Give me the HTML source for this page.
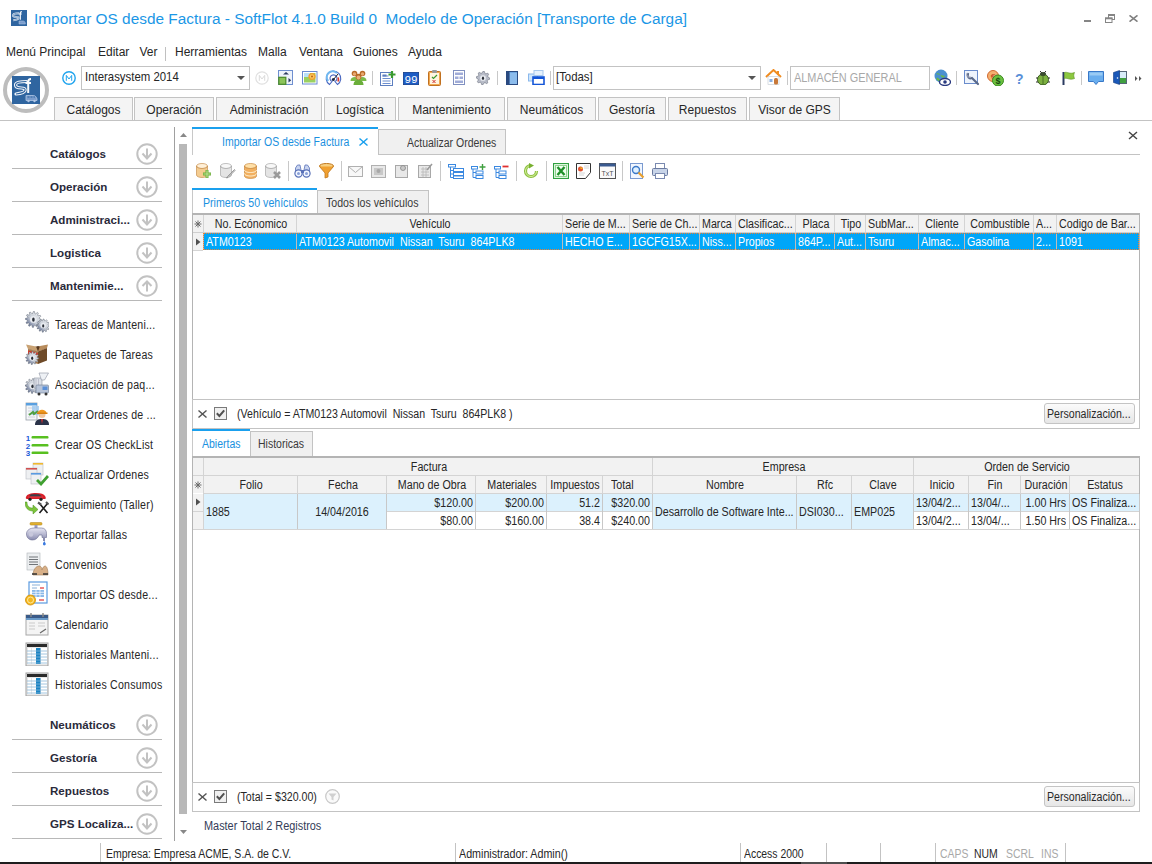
<!DOCTYPE html><html><head><meta charset="utf-8"><style>
html,body{margin:0;padding:0;width:1152px;height:864px;overflow:hidden;background:#fff;}
body{position:relative;font-family:"Liberation Sans",sans-serif;}
.t{position:absolute;white-space:pre;}
.r{position:absolute;}
</style></head><body>
<svg class="r" style="left:11px;top:10px" width="16" height="16" viewBox="0 0 16 16"><rect width="16" height="16" fill="#2f65a0"/><path d="M8.3 3.2C5 3.2 2 3.7 2 5.2s1.7 1.7 3.4 1.7 2.3.6 2 1.4C7.1 9.4 4.6 10 2.3 10.3" stroke="#eef2f8" stroke-width="1.9" fill="none"/><path d="M8.3 3.2C5 3.2 2 3.7 2 5.2s1.7 1.7 3.4 1.7 2.3.6 2 1.4C7.1 9.4 4.6 10 2.3 10.3" stroke="#2f65a0" stroke-width=".6" fill="none"/><path d="M10.9 1.7c-1.1 0-1.6.6-1.6 1.7v6.3M7.7 4h3.1" stroke="#f6f8fb" stroke-width="1.2" fill="none"/><path d="M8 11h4.3c.9 0 1.7.9 2 2v1H8z" fill="#7a9ccc" stroke="#b0c6e4" stroke-width=".5"/></svg>
<div class="t" style="left:34px;transform-origin:0 0;top:10.91px;font-size:15.40px;line-height:15.40px;color:#1b97e6;">Importar OS desde Factura - SoftFlot 4.1.0 Build 0&nbsp; Modelo de Operación [Transporte de Carga]</div>
<div class="r" style="left:1084px;top:20px;width:7px;height:2px;background:#858585;"></div>
<svg class="r" style="left:1105px;top:14px" width="10" height="9"><rect x="3.5" y=".5" width="6" height="5" fill="none" stroke="#858585" stroke-width="1"/><rect x="3" y="0" width="7" height="2" fill="#858585"/><rect x=".5" y="4" width="6.5" height="4.5" fill="#fff" stroke="#858585" stroke-width="1"/><rect x="0" y="3.5" width="7.5" height="1.8" fill="#858585"/></svg>
<svg class="r" style="left:1129px;top:15px" width="9" height="7"><path d="M.5 .3L8.5 6.7M8.5 .3L.5 6.7" stroke="#808080" stroke-width="1.5"/></svg>
<div class="t" style="left:6px;transform-origin:0 0;top:45.80px;font-size:12.00px;line-height:12.00px;color:#262626;">Menú Principal</div>
<div class="t" style="left:98px;transform-origin:0 0;top:45.80px;font-size:12.00px;line-height:12.00px;color:#262626;">Editar</div>
<div class="t" style="left:139.5px;transform-origin:0 0;top:45.80px;font-size:12.00px;line-height:12.00px;color:#262626;">Ver</div>
<div class="t" style="left:175px;transform-origin:0 0;top:45.80px;font-size:12.00px;line-height:12.00px;color:#262626;">Herramientas</div>
<div class="t" style="left:258px;transform-origin:0 0;top:45.80px;font-size:12.00px;line-height:12.00px;color:#262626;">Malla</div>
<div class="t" style="left:299px;transform-origin:0 0;top:45.80px;font-size:12.00px;line-height:12.00px;color:#262626;">Ventana</div>
<div class="t" style="left:353px;transform-origin:0 0;top:45.80px;font-size:12.00px;line-height:12.00px;color:#262626;">Guiones</div>
<div class="t" style="left:408px;transform-origin:0 0;top:45.80px;font-size:12.00px;line-height:12.00px;color:#262626;">Ayuda</div>
<div class="r" style="left:165px;top:47px;width:1px;height:14px;background:#c0c0c0;"></div>
<svg class="r" style="left:2px;top:66px" width="48" height="48"><circle cx="24" cy="24" r="21" fill="#fff" stroke="#bdbdbd" stroke-width="4"/></svg>
<svg class="r" style="left:12px;top:76px" width="28" height="28" viewBox="0 0 28 28"><rect width="28" height="28" fill="#2f65a0"/><path d="M14.5 5.5C8.5 5.5 3.5 6.5 3.5 9s3 3 6 3 4 1 3.5 2.5C12.5 16.5 8 17.5 4 18" stroke="#f2f5fa" stroke-width="3.2" fill="none" stroke-linecap="round"/><path d="M14.5 5.5C8.5 5.5 3.5 6.5 3.5 9s3 3 6 3 4 1 3.5 2.5C12.5 16.5 8 17.5 4 18" stroke="#2f65a0" stroke-width="1.1" fill="none"/><path d="M19 3c-2 0-2.8 1-2.8 3v11M13.5 7h5.5" stroke="#f6f8fb" stroke-width="2" fill="none"/><path d="M14 19.5h7.5c1.5 0 3 1.5 3.5 3.5v1.5H14z" fill="#7a9ccc" stroke="#b0c6e4" stroke-width=".8"/><path d="M15.5 21h2M18.5 21h2M21.5 21h1.5" stroke="#2f65a0" stroke-width="1"/><circle cx="16.5" cy="25" r="1.2" fill="#b0c6e4"/><circle cx="22.5" cy="25" r="1.2" fill="#b0c6e4"/></svg>
<svg class="r" style="left:62px;top:71px" width="14" height="14"><circle cx="7" cy="7" r="6.2" fill="none" stroke="#20a4ee" stroke-width="1.4"/><path d="M4.3 9.8V4.4L7 8 9.7 4.4v5.4" fill="none" stroke="#20a4ee" stroke-width="1"/></svg>
<div class="r" style="left:81px;top:66px;width:169px;height:24px;background:#fff;border:1px solid #c3c3c3;box-sizing:border-box;"></div>
<div class="t" style="left:84.5px;transform-origin:0 0;top:71.34px;font-size:12.54px;line-height:12.54px;color:#262626;transform:scaleX(0.9091);">Interasystem 2014</div>
<svg class="r" style="left:237px;top:76px" width="8" height="4"><path d="M0 0h8L4 4z" fill="#555"/></svg>
<svg class="r" style="left:255px;top:71px" width="14" height="14"><circle cx="7" cy="7" r="6.2" fill="none" stroke="#e0e0e0" stroke-width="1.2"/><path d="M4.3 9.8V4.4L7 8 9.7 4.4v5.4" fill="none" stroke="#dadada" stroke-width="1"/></svg>
<svg class="r" style="left:278px;top:70px" width="16" height="16" viewBox="0 0 16 16"><rect x=".5" y=".5" width="14" height="14" fill="#eef3fb" stroke="#6f8fd0"/><path d="M5 4.5l3-2.5 3 2.5z" fill="#2a3a60"/><rect x=".8" y="7.3" width="7" height="7" fill="#8cc45a" stroke="#4a8a28" stroke-width="1.2"/><path d="M10.5 8v4.5l2.7-2.25z" fill="#2a3a60"/></svg>
<svg class="r" style="left:302px;top:71px" width="16" height="14" viewBox="0 0 16 14"><rect x=".5" y=".5" width="14.5" height="12.5" fill="#fff" stroke="#6a8ad0"/><rect x="2" y="2" width="11.5" height="9.5" fill="#9ad060"/><rect x="2" y="2" width="6" height="4" fill="#b8e0f8"/><circle cx="10" cy="5.5" r="3.6" fill="#f0a030"/><circle cx="10" cy="5.5" r="2.2" fill="#f8c860"/><circle cx="10" cy="5.5" r="1" fill="#c06010"/></svg>
<svg class="r" style="left:325px;top:70px" width="17" height="16" viewBox="0 0 17 16"><path d="M4.5 14.5A7.3 7.3 0 1 1 12.5 14.5L10 11.5A3.5 3.5 0 1 0 7 11.5z" fill="#fff" stroke="#4a68c0" stroke-width="1.1"/><path d="M3.2 11A5.8 5.8 0 0 1 12 3.2" fill="none" stroke="#70b8f0" stroke-width="2"/><path d="M13.2 7.5A5.8 5.8 0 0 1 13 11.5" fill="none" stroke="#e03828" stroke-width="1.6"/><path d="M8.5 9.5L13 4" stroke="#222" stroke-width="1"/><circle cx="8.3" cy="9.6" r="1.5" fill="#1a2848"/></svg>
<svg class="r" style="left:350px;top:70px" width="17" height="15" viewBox="0 0 17 15"><path d="M0.5 11c0-3 2-4 4-4s4 1 4 4z" fill="#7cbc4c"/><path d="M8.5 11c0-3 2-4 4-4s4 1 4 4z" fill="#7cbc4c"/><circle cx="4.5" cy="3.5" r="2.8" fill="#b86a28"/><circle cx="12.5" cy="3.5" r="2.8" fill="#b86a28"/><circle cx="4.5" cy="4" r="1.7" fill="#e8a870"/><circle cx="12.5" cy="4" r="1.7" fill="#e8a870"/><path d="M3.5 15c0-4 2.5-5 5-5s5 1 5 5z" fill="#6aae3a"/><circle cx="8.5" cy="6.8" r="3" fill="#b86a28"/><circle cx="8.5" cy="7.4" r="1.9" fill="#eab078"/></svg>
<div class="r" style="left:372px;top:71px;width:1px;height:14px;background:#c8c8c8;"></div>
<svg class="r" style="left:380px;top:70px" width="16" height="16" viewBox="0 0 16 16"><rect x=".5" y="2.5" width="12" height="13" fill="#fff" stroke="#5d7fc0"/><path d="M2.5 6h6M2.5 8.5h8M2.5 11h8M2.5 13.5h8" stroke="#6d8fd0" stroke-width="1.2"/><rect x="2.5" y="4.5" width="4" height="2" fill="#5d7fc0"/><path d="M12 1v7M8.5 4.5h7" stroke="#3a9a30" stroke-width="2.2"/></svg>
<svg class="r" style="left:403px;top:72px" width="16" height="13" viewBox="0 0 16 13"><rect width="16" height="13" fill="#1d5cc4" stroke="#334" stroke-width=".6"/><text x="8" y="11" font-family="Liberation Mono" font-size="11" fill="#fff" text-anchor="middle">99</text></svg>
<svg class="r" style="left:428px;top:70px" width="13" height="16" viewBox="0 0 13 16"><rect x=".5" y="1.5" width="12" height="14" rx="1" fill="#f0a850" stroke="#c07020"/><rect x="2" y="3" width="9" height="11" fill="#fff5e0"/><rect x="4" y="0" width="5" height="3" rx="1" fill="#999"/><path d="M4 7l1.5 1.5L9 5" stroke="#3a9a30" stroke-width="1.2" fill="none"/><path d="M4.5 10l3 3M7.5 10l-3 3" stroke="#d03030" stroke-width="1"/></svg>
<svg class="r" style="left:453px;top:70px" width="12" height="15" viewBox="0 0 12 15"><rect x=".5" y=".5" width="11" height="14" fill="#fff" stroke="#8090c0"/><rect x="2" y="2.5" width="8" height="2.5" fill="#a0acd8"/><rect x="2" y="6.5" width="3.5" height="2.5" fill="#a0acd8"/><rect x="6.5" y="6.5" width="3.5" height="2.5" fill="#a0acd8"/><rect x="2" y="10.5" width="8" height="2.5" fill="#a0acd8"/></svg>
<svg class="r" style="left:476px;top:71px" width="14" height="14"><polygon points="13.80,7.00 13.67,8.33 11.65,8.93 11.18,9.80 11.81,11.81 10.78,12.65 8.93,11.65 7.98,11.94 7.00,13.80 5.67,13.67 5.07,11.65 4.20,11.18 2.19,11.81 1.35,10.78 2.35,8.93 2.06,7.98 0.20,7.00 0.33,5.67 2.35,5.07 2.82,4.20 2.19,2.19 3.22,1.35 5.07,2.35 6.02,2.06 7.00,0.20 8.33,0.33 8.93,2.35 9.80,2.82 11.81,2.19 12.65,3.22 11.65,5.07 11.94,6.02" fill="#b8bcc8" stroke="#5a6070" stroke-width=".5"/><circle cx="7" cy="7" r="2.86" fill="#e8ebf0"/><ellipse cx="7" cy="7.3" rx="1.09" ry="1.77" fill="#2a2f38"/></svg>
<div class="r" style="left:497px;top:71px;width:1px;height:14px;background:#c8c8c8;"></div>
<svg class="r" style="left:506px;top:71px" width="12" height="14" viewBox="0 0 12 14"><rect x=".5" y=".5" width="11" height="13" fill="#6ea6e0" stroke="#2a4a80"/><rect x=".5" y=".5" width="3" height="13" fill="#2a4a80"/><rect x="4" y="2" width="7" height="11" fill="#8cbcec"/></svg>
<svg class="r" style="left:528px;top:70px" width="17" height="15" viewBox="0 0 17 15"><rect x=".5" y="4" width="9" height="7" fill="#cfe6fb" stroke="#8ab8ec"/><rect x="6" y=".5" width="9" height="5" fill="#e6f2fd" stroke="#a8c8ec"/><rect x="5" y="7" width="11" height="7.5" fill="#fff" stroke="#1456d8" stroke-width="1.6"/><rect x="5" y="7" width="11" height="2" fill="#1456d8"/></svg>
<div class="r" style="left:550px;top:71px;width:1px;height:14px;background:#c8c8c8;"></div>
<div class="r" style="left:553px;top:66px;width:208px;height:24px;background:#fff;border:1px solid #c3c3c3;box-sizing:border-box;"></div>
<div class="t" style="left:556px;transform-origin:0 0;top:71.34px;font-size:12.54px;line-height:12.54px;color:#262626;transform:scaleX(0.9091);">[Todas]</div>
<svg class="r" style="left:748px;top:76px" width="8" height="4"><path d="M0 0h8L4 4z" fill="#555"/></svg>
<svg class="r" style="left:765px;top:69px" width="17" height="16" viewBox="0 0 17 16"><path d="M1 8L8.5 1 16 8" fill="none" stroke="#f08c20" stroke-width="2"/><rect x="3" y="7.5" width="11" height="8" fill="#fff" stroke="#c0c8d0" stroke-width=".6"/><rect x="9" y="9" width="4" height="6.5" rx="1.5" fill="#c87838"/><rect x="4.5" y="10" width="3" height="3" fill="#8ab0e0"/><rect x="12" y="2" width="2" height="4" fill="#f08c20"/></svg>
<div class="r" style="left:787px;top:71px;width:1px;height:14px;background:#c8c8c8;"></div>
<div class="r" style="left:790px;top:66px;width:140px;height:24px;background:#fff;border:1px solid #c3c3c3;box-sizing:border-box;"></div>
<div class="t" style="left:793.5px;transform-origin:0 0;top:71.80px;font-size:12.00px;line-height:12.00px;color:#a8a8a8;transform:scaleX(0.9083);">ALMACÉN GENERAL</div>
<svg class="r" style="left:934px;top:69px" width="17" height="17" viewBox="0 0 17 17"><circle cx="7" cy="7" r="6.5" fill="#4a90d0"/><path d="M2 5c2-2 4 0 5 2s3 2 4 0" fill="#6cb848"/><path d="M3 9c1 2 3 3 4 2" stroke="#6cb848" stroke-width="2" fill="none"/><ellipse cx="11" cy="13" rx="5.5" ry="3.5" fill="#fff" stroke="#2a3a80" stroke-width="1.4"/><circle cx="11" cy="13" r="1.8" fill="#2a3a80"/></svg>
<div class="r" style="left:956px;top:71px;width:1px;height:14px;background:#c8c8c8;"></div>
<svg class="r" style="left:964px;top:70px" width="16" height="16" viewBox="0 0 16 16"><rect x=".5" y=".5" width="13" height="13" fill="#eef4fc" stroke="#6a8ccc"/><path d="M4 4a3 3 0 0 0 4 4l6 6" stroke="#5a6a8a" stroke-width="2.2" fill="none" stroke-linecap="round"/><path d="M3 3a3 3 0 0 0 4 4" stroke="#aab" stroke-width="1" fill="none"/></svg>
<svg class="r" style="left:987px;top:70px" width="17" height="16" viewBox="0 0 17 16"><circle cx="6" cy="6" r="5.5" fill="#f4b070" stroke="#d06830"/><text x="6" y="9" font-size="8" fill="#c04020" text-anchor="middle" font-family="Liberation Sans">€</text><circle cx="11" cy="10.5" r="5.5" fill="#6cc040" stroke="#3a8a20"/><text x="11" y="14" font-size="9" fill="#1a4a10" text-anchor="middle" font-family="Liberation Sans" font-weight="700">$</text></svg>
<div class="t" style="left:1015px;transform-origin:0 0;top:72.10px;font-size:14.00px;line-height:14.00px;color:#5a90d8;font-weight:700;">?</div>
<svg class="r" style="left:1036px;top:70px" width="14" height="15" viewBox="0 0 14 15"><path d="M4 1l2 2M10 1L8 3" stroke="#333" stroke-width="1"/><ellipse cx="7" cy="9.5" rx="5.5" ry="5.5" fill="#7cb040" stroke="#3a6020"/><ellipse cx="7" cy="4" rx="3" ry="2" fill="#3a4a30"/><path d="M7 4v11" stroke="#3a6020" stroke-width=".8"/><path d="M0 8h2M12 8h2M0 12h2M12 12h2" stroke="#333" stroke-width="1"/></svg>
<svg class="r" style="left:1062px;top:71px" width="13" height="14" viewBox="0 0 13 14"><path d="M1.5 1v13" stroke="#2a3a60" stroke-width="2"/><path d="M2.5 1.5c3-1 5 2 10 0-1 2-1 4 0 6-5 2-7-1-10 0z" fill="#8cc840" stroke="#5a9020" stroke-width=".6"/></svg>
<div class="r" style="left:1081px;top:71px;width:1px;height:14px;background:#c8c8c8;"></div>
<svg class="r" style="left:1088px;top:71px" width="16" height="14" viewBox="0 0 16 14"><path d="M.5 .5h15v10h-5l-2.5 3-2.5-3h-5z" fill="#6aaeee" stroke="#3878c8"/><path d="M1.5 1.5h13v3h-13z" fill="#9acbf4"/></svg>
<svg class="r" style="left:1113px;top:70px" width="14" height="15" viewBox="0 0 14 15"><rect x="6" y="1.5" width="7.5" height="12" fill="#d8ecf8" stroke="#567"/><rect x="6.5" y="8" width="6.5" height="5" fill="#40a040"/><path d="M.5 2.5L6.5 .5v14l-6-2z" fill="#1a58b8" stroke="#103a80" stroke-width=".6"/><circle cx="4.5" cy="8" r=".8" fill="#fff"/></svg>
<svg class="r" style="left:1135px;top:76px" width="7" height="5"><path d="M0 0l2.5 2.5L0 5zM4 0l2.5 2.5L4 5z" fill="#555"/></svg>
<div class="r" style="left:0px;top:120px;width:1152px;height:1px;background:#c3c3c3;"></div>
<div class="r" style="left:54px;top:97px;width:79px;height:23px;background:#f4f4f4;border:1px solid #c3c3c3;box-sizing:border-box;border-bottom:none;"></div>
<div class="t" style="left:-206.5px;width:600px;text-align:center;transform-origin:300px 0;top:103.80px;font-size:12.00px;line-height:12.00px;color:#262626;">Catálogos</div>
<div class="r" style="left:134px;top:97px;width:80px;height:23px;background:#f4f4f4;border:1px solid #c3c3c3;box-sizing:border-box;border-bottom:none;"></div>
<div class="t" style="left:-126.0px;width:600px;text-align:center;transform-origin:300px 0;top:103.80px;font-size:12.00px;line-height:12.00px;color:#262626;">Operación</div>
<div class="r" style="left:216px;top:97px;width:106px;height:23px;background:#f4f4f4;border:1px solid #c3c3c3;box-sizing:border-box;border-bottom:none;"></div>
<div class="t" style="left:-31.0px;width:600px;text-align:center;transform-origin:300px 0;top:103.80px;font-size:12.00px;line-height:12.00px;color:#262626;">Administración</div>
<div class="r" style="left:324px;top:97px;width:72px;height:23px;background:#f4f4f4;border:1px solid #c3c3c3;box-sizing:border-box;border-bottom:none;"></div>
<div class="t" style="left:60.0px;width:600px;text-align:center;transform-origin:300px 0;top:103.80px;font-size:12.00px;line-height:12.00px;color:#262626;">Logística</div>
<div class="r" style="left:398px;top:97px;width:107px;height:23px;background:#f4f4f4;border:1px solid #c3c3c3;box-sizing:border-box;border-bottom:none;"></div>
<div class="t" style="left:151.5px;width:600px;text-align:center;transform-origin:300px 0;top:103.80px;font-size:12.00px;line-height:12.00px;color:#262626;">Mantenimiento</div>
<div class="r" style="left:507px;top:97px;width:89px;height:23px;background:#f4f4f4;border:1px solid #c3c3c3;box-sizing:border-box;border-bottom:none;"></div>
<div class="t" style="left:251.5px;width:600px;text-align:center;transform-origin:300px 0;top:103.80px;font-size:12.00px;line-height:12.00px;color:#262626;">Neumáticos</div>
<div class="r" style="left:598px;top:97px;width:68px;height:23px;background:#f4f4f4;border:1px solid #c3c3c3;box-sizing:border-box;border-bottom:none;"></div>
<div class="t" style="left:332.0px;width:600px;text-align:center;transform-origin:300px 0;top:103.80px;font-size:12.00px;line-height:12.00px;color:#262626;">Gestoría</div>
<div class="r" style="left:668px;top:97px;width:79px;height:23px;background:#f4f4f4;border:1px solid #c3c3c3;box-sizing:border-box;border-bottom:none;"></div>
<div class="t" style="left:407.5px;width:600px;text-align:center;transform-origin:300px 0;top:103.80px;font-size:12.00px;line-height:12.00px;color:#262626;">Repuestos</div>
<div class="r" style="left:749px;top:97px;width:91px;height:23px;background:#f4f4f4;border:1px solid #c3c3c3;box-sizing:border-box;border-bottom:none;"></div>
<div class="t" style="left:494.5px;width:600px;text-align:center;transform-origin:300px 0;top:103.80px;font-size:12.00px;line-height:12.00px;color:#262626;">Visor de GPS</div>
<div class="t" style="left:50px;transform-origin:0 0;top:147.94px;font-size:11.60px;line-height:11.60px;color:#2a2a3a;font-weight:700;">Catálogos</div>
<svg class="r" style="left:136px;top:143px" width="22" height="22"><circle cx="11" cy="11" r="9.7" fill="none" stroke="#c2c2c2" stroke-width="2"/><path d="M11 15.5V5.5M6.5 10.5L11 15.5 15.5 10.5" fill="none" stroke="#c2c2c2" stroke-width="2"/></svg>
<div class="t" style="left:50px;transform-origin:0 0;top:180.94px;font-size:11.60px;line-height:11.60px;color:#2a2a3a;font-weight:700;">Operación</div>
<svg class="r" style="left:136px;top:176px" width="22" height="22"><circle cx="11" cy="11" r="9.7" fill="none" stroke="#c2c2c2" stroke-width="2"/><path d="M11 15.5V5.5M6.5 10.5L11 15.5 15.5 10.5" fill="none" stroke="#c2c2c2" stroke-width="2"/></svg>
<div class="t" style="left:50px;transform-origin:0 0;top:213.94px;font-size:11.60px;line-height:11.60px;color:#2a2a3a;font-weight:700;">Administraci...</div>
<svg class="r" style="left:136px;top:209px" width="22" height="22"><circle cx="11" cy="11" r="9.7" fill="none" stroke="#c2c2c2" stroke-width="2"/><path d="M11 15.5V5.5M6.5 10.5L11 15.5 15.5 10.5" fill="none" stroke="#c2c2c2" stroke-width="2"/></svg>
<div class="t" style="left:50px;transform-origin:0 0;top:246.94px;font-size:11.60px;line-height:11.60px;color:#2a2a3a;font-weight:700;">Logistica</div>
<svg class="r" style="left:136px;top:242px" width="22" height="22"><circle cx="11" cy="11" r="9.7" fill="none" stroke="#c2c2c2" stroke-width="2"/><path d="M11 15.5V5.5M6.5 10.5L11 15.5 15.5 10.5" fill="none" stroke="#c2c2c2" stroke-width="2"/></svg>
<div class="t" style="left:50px;transform-origin:0 0;top:279.94px;font-size:11.60px;line-height:11.60px;color:#2a2a3a;font-weight:700;">Mantenimie...</div>
<svg class="r" style="left:136px;top:275px" width="22" height="22"><circle cx="11" cy="11" r="9.7" fill="none" stroke="#c2c2c2" stroke-width="2"/><path d="M11 16.5V6.5M6.5 11L11 6.5 15.5 11" fill="none" stroke="#c2c2c2" stroke-width="2"/></svg>
<div class="t" style="left:50px;transform-origin:0 0;top:718.94px;font-size:11.60px;line-height:11.60px;color:#2a2a3a;font-weight:700;">Neumáticos</div>
<svg class="r" style="left:136px;top:714px" width="22" height="22"><circle cx="11" cy="11" r="9.7" fill="none" stroke="#c2c2c2" stroke-width="2"/><path d="M11 15.5V5.5M6.5 10.5L11 15.5 15.5 10.5" fill="none" stroke="#c2c2c2" stroke-width="2"/></svg>
<div class="t" style="left:50px;transform-origin:0 0;top:751.94px;font-size:11.60px;line-height:11.60px;color:#2a2a3a;font-weight:700;">Gestoría</div>
<svg class="r" style="left:136px;top:747px" width="22" height="22"><circle cx="11" cy="11" r="9.7" fill="none" stroke="#c2c2c2" stroke-width="2"/><path d="M11 15.5V5.5M6.5 10.5L11 15.5 15.5 10.5" fill="none" stroke="#c2c2c2" stroke-width="2"/></svg>
<div class="t" style="left:50px;transform-origin:0 0;top:784.94px;font-size:11.60px;line-height:11.60px;color:#2a2a3a;font-weight:700;">Repuestos</div>
<svg class="r" style="left:136px;top:780px" width="22" height="22"><circle cx="11" cy="11" r="9.7" fill="none" stroke="#c2c2c2" stroke-width="2"/><path d="M11 15.5V5.5M6.5 10.5L11 15.5 15.5 10.5" fill="none" stroke="#c2c2c2" stroke-width="2"/></svg>
<div class="t" style="left:50px;transform-origin:0 0;top:817.94px;font-size:11.60px;line-height:11.60px;color:#2a2a3a;font-weight:700;">GPS Localiza...</div>
<svg class="r" style="left:136px;top:813px" width="22" height="22"><circle cx="11" cy="11" r="9.7" fill="none" stroke="#c2c2c2" stroke-width="2"/><path d="M11 15.5V5.5M6.5 10.5L11 15.5 15.5 10.5" fill="none" stroke="#c2c2c2" stroke-width="2"/></svg>
<div class="r" style="left:12px;top:168px;width:150px;height:1px;background:#b8b8b8;"></div>
<div class="r" style="left:12px;top:201px;width:150px;height:1px;background:#b8b8b8;"></div>
<div class="r" style="left:12px;top:234px;width:150px;height:1px;background:#b8b8b8;"></div>
<div class="r" style="left:12px;top:267px;width:150px;height:1px;background:#b8b8b8;"></div>
<div class="r" style="left:12px;top:300px;width:150px;height:1px;background:#b8b8b8;"></div>
<div class="r" style="left:12px;top:739px;width:150px;height:1px;background:#b8b8b8;"></div>
<div class="r" style="left:12px;top:772px;width:150px;height:1px;background:#b8b8b8;"></div>
<div class="r" style="left:12px;top:805px;width:150px;height:1px;background:#b8b8b8;"></div>
<div class="r" style="left:12px;top:838px;width:150px;height:1px;background:#b8b8b8;"></div>
<div class="t" style="left:55px;transform-origin:0 0;top:319.40px;font-size:12.00px;line-height:12.00px;color:#262626;transform:scaleX(0.8833);letter-spacing:0.25px;">Tareas de Manteni...</div>
<svg class="r" style="left:25px;top:311px" width="24" height="24"><defs><linearGradient id="g2" x1="1" y1="0" x2="0" y2="1"><stop offset="0" stop-color="#f4f6f8"/><stop offset=".55" stop-color="#c4cad4"/><stop offset="1" stop-color="#3a4a78"/></linearGradient></defs><polygon points="16.40,8.40 16.33,9.44 14.12,9.93 13.87,10.67 15.33,12.40 14.75,13.27 12.59,12.59 12.00,13.10 12.40,15.33 11.46,15.79 9.93,14.12 9.17,14.27 8.40,16.40 7.36,16.33 6.87,14.12 6.13,13.87 4.40,15.33 3.53,14.75 4.21,12.59 3.70,12.00 1.47,12.40 1.01,11.46 2.68,9.93 2.53,9.17 0.40,8.40 0.47,7.36 2.68,6.87 2.93,6.13 1.47,4.40 2.05,3.53 4.21,4.21 4.80,3.70 4.40,1.47 5.34,1.01 6.87,2.68 7.63,2.53 8.40,0.40 9.44,0.47 9.93,2.68 10.67,2.93 12.40,1.47 13.27,2.05 12.59,4.21 13.10,4.80 15.33,4.40 15.79,5.34 14.12,6.87 14.27,7.63" fill="url(#g2)" stroke="#5a6270" stroke-width=".5"/><circle cx="8.4" cy="8.4" r="3.36" fill="#e8ebf0"/><ellipse cx="8.4" cy="8.700000000000001" rx="1.28" ry="2.08" fill="#2a2f38"/><defs><linearGradient id="g3" x1="1" y1="0" x2="0" y2="1"><stop offset="0" stop-color="#f4f6f8"/><stop offset=".55" stop-color="#c4cad4"/><stop offset="1" stop-color="#3a4a78"/></linearGradient></defs><polygon points="24.80,14.60 24.74,15.46 22.92,15.86 22.71,16.47 23.92,17.90 23.44,18.62 21.65,18.05 21.17,18.47 21.50,20.32 20.73,20.70 19.46,19.32 18.84,19.44 18.20,21.20 17.34,21.14 16.94,19.32 16.33,19.11 14.90,20.32 14.18,19.84 14.75,18.05 14.33,17.57 12.48,17.90 12.10,17.13 13.48,15.86 13.36,15.24 11.60,14.60 11.66,13.74 13.48,13.34 13.69,12.73 12.48,11.30 12.96,10.58 14.75,11.15 15.23,10.73 14.90,8.88 15.67,8.50 16.94,9.88 17.56,9.76 18.20,8.00 19.06,8.06 19.46,9.88 20.07,10.09 21.50,8.88 22.22,9.36 21.65,11.15 22.07,11.63 23.92,11.30 24.30,12.07 22.92,13.34 23.04,13.96" fill="url(#g3)" stroke="#5a6270" stroke-width=".5"/><circle cx="18.2" cy="14.6" r="2.77" fill="#e8ebf0"/><ellipse cx="18.2" cy="14.9" rx="1.06" ry="1.72" fill="#2a2f38"/></svg>
<div class="t" style="left:55px;transform-origin:0 0;top:349.40px;font-size:12.00px;line-height:12.00px;color:#262626;transform:scaleX(0.8833);letter-spacing:0.25px;">Paquetes de Tareas</div>
<svg class="r" style="left:25px;top:341px" width="24" height="24"><path d="M3 8l10 2.5V23L3 20z" fill="#a87a4c"/><path d="M13 10.5L22 7v12.5L13 23z" fill="#6e4a28"/><path d="M3 8l10 2.5 9-3.5-9-2z" fill="#5a3a20"/><path d="M3 8L1 3.5l10 2 2 5z" fill="#c9a274"/><path d="M13 10.5l2-5.5 8 -1.5-1 3.5z" fill="#b88c5c"/><path d="M3 9.5l10 2.5v3L3 12.5z" fill="#d83828"/><defs><linearGradient id="g4" x1="1" y1="0" x2="0" y2="1"><stop offset="0" stop-color="#f4f6f8"/><stop offset=".55" stop-color="#c4cad4"/><stop offset="1" stop-color="#3a4a78"/></linearGradient></defs><polygon points="13.80,17.00 13.74,17.86 11.92,18.26 11.71,18.87 12.92,20.30 12.44,21.02 10.65,20.45 10.17,20.87 10.50,22.72 9.73,23.10 8.46,21.72 7.84,21.84 7.20,23.60 6.34,23.54 5.94,21.72 5.33,21.51 3.90,22.72 3.18,22.24 3.75,20.45 3.33,19.97 1.48,20.30 1.10,19.53 2.48,18.26 2.36,17.64 0.60,17.00 0.66,16.14 2.48,15.74 2.69,15.13 1.48,13.70 1.96,12.98 3.75,13.55 4.23,13.13 3.90,11.28 4.67,10.90 5.94,12.28 6.56,12.16 7.20,10.40 8.06,10.46 8.46,12.28 9.07,12.49 10.50,11.28 11.22,11.76 10.65,13.55 11.07,14.03 12.92,13.70 13.30,14.47 11.92,15.74 12.04,16.36" fill="url(#g4)" stroke="#5a6270" stroke-width=".5"/><circle cx="7.2" cy="17" r="2.77" fill="#e8ebf0"/><ellipse cx="7.2" cy="17.3" rx="1.06" ry="1.72" fill="#2a2f38"/></svg>
<div class="t" style="left:55px;transform-origin:0 0;top:379.40px;font-size:12.00px;line-height:12.00px;color:#262626;transform:scaleX(0.8833);letter-spacing:0.25px;">Asociación de paq...</div>
<svg class="r" style="left:25px;top:372px" width="24" height="25"><defs><linearGradient id="g5" x1="1" y1="0" x2="0" y2="1"><stop offset="0" stop-color="#f4f6f8"/><stop offset=".55" stop-color="#c4cad4"/><stop offset="1" stop-color="#3a4a78"/></linearGradient></defs><polygon points="14.90,14.00 14.84,14.97 12.79,15.42 12.56,16.10 13.91,17.70 13.37,18.50 11.37,17.87 10.83,18.34 11.20,20.41 10.33,20.84 8.92,19.29 8.21,19.43 7.50,21.40 6.53,21.34 6.08,19.29 5.40,19.06 3.80,20.41 3.00,19.87 3.63,17.87 3.16,17.33 1.09,17.70 0.66,16.83 2.21,15.42 2.07,14.71 0.10,14.00 0.16,13.03 2.21,12.58 2.44,11.90 1.09,10.30 1.63,9.50 3.63,10.13 4.17,9.66 3.80,7.59 4.67,7.16 6.08,8.71 6.79,8.57 7.50,6.60 8.47,6.66 8.92,8.71 9.60,8.94 11.20,7.59 12.00,8.13 11.37,10.13 11.84,10.67 13.91,10.30 14.34,11.17 12.79,12.58 12.93,13.29" fill="url(#g5)" stroke="#5a6270" stroke-width=".5"/><circle cx="7.5" cy="14" r="3.11" fill="#e8ebf0"/><ellipse cx="7.5" cy="14.3" rx="1.18" ry="1.92" fill="#2a2f38"/><path d="M9 6h8v10H9z" fill="#dde1e8" stroke="#8a90a0" stroke-width=".6"/><path d="M11 7v8M13.5 7v8" stroke="#aab" stroke-width=".6"/><path d="M14 1h9.5l-4 7h-3z" fill="#eef1f5" stroke="#8a90a0" stroke-width=".6"/><rect x="11" y="13" width="12.5" height="8" rx="1" fill="#b8c4d8" stroke="#6a7890" stroke-width=".6"/><rect x="17.5" y="14.5" width="5" height="3.5" fill="#5a90d8"/><circle cx="14" cy="22" r="1.5" fill="#333"/><circle cx="21" cy="22" r="1.5" fill="#333"/></svg>
<div class="t" style="left:55px;transform-origin:0 0;top:409.40px;font-size:12.00px;line-height:12.00px;color:#262626;transform:scaleX(0.8833);letter-spacing:0.25px;">Crear Ordenes de ...</div>
<svg class="r" style="left:25px;top:402px" width="24" height="24"><rect x="1" y="1" width="11" height="17" fill="#f4f6f8" stroke="#9aa0aa" stroke-width=".8"/><rect x="1" y="1" width="11" height="2.5" fill="#5aa0e0"/><path d="M3 6h7M3 9h7M3 12h7M3 15h7" stroke="#c8ccd4" stroke-width=".8"/><rect x="7" y="4" width="7" height="9" fill="#9cc8f0" opacity=".8"/><path d="M4 13l4-3 1 2 4-3" stroke="#50a040" stroke-width="2" fill="none"/><path d="M10 23c0-5 3-6 7-6s7 1 7 6z" fill="#2a3248"/><path d="M16 17l1 5 1-5z" fill="#d03030"/><circle cx="17" cy="12.5" r="3.5" fill="#f0c8a0"/><path d="M12.5 11.5c0-5 9-5 9 0z" fill="#f09820"/><rect x="12" y="10.5" width="10.5" height="1.5" fill="#d88010"/></svg>
<div class="t" style="left:55px;transform-origin:0 0;top:439.40px;font-size:12.00px;line-height:12.00px;color:#262626;transform:scaleX(0.8833);letter-spacing:0.25px;">Crear OS CheckList</div>
<svg class="r" style="left:25px;top:433px" width="24" height="24"><text x="3" y="7.5" font-family="Liberation Sans" font-weight="700" font-size="8" fill="#1a5ad8" text-anchor="middle">1</text><rect x="6.5" y="3.0" width="17" height="2.6" rx="1.2" fill="#58c020"/><text x="3" y="15.5" font-family="Liberation Sans" font-weight="700" font-size="8" fill="#1a5ad8" text-anchor="middle">2</text><rect x="6.5" y="11.0" width="17" height="2.6" rx="1.2" fill="#58c020"/><text x="3" y="23" font-family="Liberation Sans" font-weight="700" font-size="8" fill="#1a5ad8" text-anchor="middle">3</text><rect x="6.5" y="18.5" width="17" height="2.6" rx="1.2" fill="#58c020"/></svg>
<div class="t" style="left:55px;transform-origin:0 0;top:469.40px;font-size:12.00px;line-height:12.00px;color:#262626;transform:scaleX(0.8833);letter-spacing:0.25px;">Actualizar Ordenes</div>
<svg class="r" style="left:25px;top:462px" width="24" height="24"><rect x="8" y="1" width="10" height="12" fill="#eef0f2" stroke="#b8bcc4" stroke-width=".6"/><rect x="8" y="1" width="10" height="1.6" fill="#f0b830"/><rect x="1" y="6" width="11" height="11" fill="#eef0f2" stroke="#b8bcc4" stroke-width=".6"/><rect x="1" y="6" width="11" height="1.6" fill="#d05050"/><rect x="6" y="11" width="10" height="11" fill="#eef0f2" stroke="#b8bcc4" stroke-width=".6"/><rect x="6" y="11" width="10" height="1.6" fill="#5a9ae0"/><path d="M12 18l4 4 7-8" stroke="#40a030" stroke-width="2.8" fill="none"/></svg>
<div class="t" style="left:55px;transform-origin:0 0;top:499.40px;font-size:12.00px;line-height:12.00px;color:#262626;transform:scaleX(0.8833);letter-spacing:0.25px;">Seguimiento (Taller)</div>
<svg class="r" style="left:25px;top:491px" width="24" height="26"><path d="M1 6c1-3 5-4 10-4s8 1 9 3c1 1 1 3 0 3H2c-1 0-1.5-1-1-2z" fill="#d81e28"/><path d="M6 3.2h8l3 2.3H4z" fill="#3a3f48"/><path d="M3 6h15" stroke="#f05058" stroke-width=".6"/><circle cx="5" cy="8.3" r="1.6" fill="#222"/><circle cx="16" cy="8.3" r="1.6" fill="#222"/><path d="M2 11c0 4 2 6 6 6v-3l5 4.5-5 4.5v-3c-5 0-8-3-8-9z" fill="#7cc43a" stroke="#4a9020" stroke-width=".5"/><path d="M14.5 12.5l8 9.5M22.5 12.5l-8 9.5" stroke="#1e1e1e" stroke-width="1.6"/><path d="M13 11.5l3.2 2.2M21 11l2.5 2.5" stroke="#555" stroke-width="2.2"/></svg>
<div class="t" style="left:55px;transform-origin:0 0;top:529.40px;font-size:12.00px;line-height:12.00px;color:#262626;transform:scaleX(0.8833);letter-spacing:0.25px;">Reportar fallas</div>
<svg class="r" style="left:25px;top:522px" width="24" height="24"><defs><linearGradient id="fau" x1="0" y1="0" x2="0" y2="1"><stop offset="0" stop-color="#e8e8f4"/><stop offset="1" stop-color="#8a8cb0"/></linearGradient></defs><rect x="5" y="0.5" width="12" height="2.6" rx="1" fill="#e0b030" stroke="#b08010" stroke-width=".5"/><rect x="9.5" y="3" width="3" height="3.5" fill="#9a9cc0"/><path d="M1.5 12c0-4 3.5-6 8-6h7c3.5 0 5 2.5 5 5.5v4h-4.5v-2.5h-3c-1 3-3.5 5-6.5 5S1.5 16 1.5 12z" fill="url(#fau)" stroke="#6a6c90" stroke-width=".6"/><circle cx="6" cy="12.5" r="2.2" fill="#c8c8dc"/><path d="M19 16v3" stroke="#8a8cb0" stroke-width="2"/><path d="M19.5 19c-1 1.5-2 2.5-1.3 3.8s2.6.3 2.6-.8-1.3-1.8-1.3-3z" fill="#3a7ae0"/></svg>
<div class="t" style="left:55px;transform-origin:0 0;top:559.40px;font-size:12.00px;line-height:12.00px;color:#262626;transform:scaleX(0.8833);letter-spacing:0.25px;">Convenios</div>
<svg class="r" style="left:25px;top:552px" width="24" height="24"><rect x="2" y="1" width="13" height="17" fill="#eceef0" stroke="#b0b4b8" stroke-width=".6"/><path d="M4 5h9M4 7.5h9M4 10h9M4 12.5h9" stroke="#707478" stroke-width="1.2"/><path d="M8 23c0-5 3-9 6-9s3 4 3 4 1-4 3-4 3 4 3 9z" fill="#d8b088" stroke="#a07850" stroke-width=".6"/><path d="M7 22h5M18 22h5" stroke="#333" stroke-width="1.5"/></svg>
<div class="t" style="left:55px;transform-origin:0 0;top:589.40px;font-size:12.00px;line-height:12.00px;color:#262626;transform:scaleX(0.8833);letter-spacing:0.25px;">Importar OS desde...</div>
<svg class="r" style="left:25px;top:581px" width="24" height="25"><rect x="4" y="1" width="18" height="21" fill="#fff" stroke="#5a9ae0" stroke-width="1.2"/><path d="M7 4h8" stroke="#8ab0d8" stroke-width="1"/><path d="M7 7h5" stroke="#8ab0d8"/><path d="M15 7h4" stroke="#e03030" stroke-width="1.2"/><rect x="7" y="9" width="12" height="7" fill="#8ab8e8"/><path d="M7 11.3h12M7 13.6h12M11 9v7M15 9v7" stroke="#fff" stroke-width=".7"/><path d="M14 19h5" stroke="#e03030" stroke-width="1.2"/><circle cx="5.5" cy="19" r="5" fill="#f4b820" stroke="#d08a00" stroke-width=".8"/><circle cx="5.5" cy="19" r="3" fill="none" stroke="#fff4c0" stroke-width=".8"/></svg>
<div class="t" style="left:55px;transform-origin:0 0;top:619.40px;font-size:12.00px;line-height:12.00px;color:#262626;transform:scaleX(0.8833);letter-spacing:0.25px;">Calendario</div>
<svg class="r" style="left:25px;top:612px" width="24" height="24"><rect x="1" y="3" width="22" height="20" fill="#f4f4f4" stroke="#a8a8a8" stroke-width="1"/><rect x="1" y="3" width="22" height="5" fill="#3a5a88"/><rect x="1" y="6" width="22" height="2" fill="#6a9ac8"/><path d="M6 1v4M18 1v4" stroke="#888" stroke-width="1.4"/><path d="M4 11h6M4 14h6M4 17h6M13 11h7M13 14h7" stroke="#c0c0c0" stroke-width=".8"/><path d="M15 21l6-4" stroke="#666" stroke-width="1.2"/></svg>
<div class="t" style="left:55px;transform-origin:0 0;top:649.40px;font-size:12.00px;line-height:12.00px;color:#262626;transform:scaleX(0.8833);letter-spacing:0.25px;">Historiales Manteni...</div>
<svg class="r" style="left:25px;top:642px" width="24" height="24"><rect x="1" y="1" width="22" height="23" fill="#e8e8e8" stroke="#a0a0a0" stroke-width="1"/><rect x="2" y="2" width="20" height="3" fill="#2a2a2a"/><rect x="3" y="6" width="3" height="16" fill="#fff"/><rect x="7" y="6" width="4" height="16" fill="#fff"/><rect x="11" y="6" width="4.5" height="16" fill="#1a84c4"/><rect x="16" y="6" width="6" height="16" fill="#fff"/><path d="M2 9h20M2 12h20M2 15h20M2 18h20M2 21h20" stroke="#8cb8d8" stroke-width=".8"/></svg>
<div class="t" style="left:55px;transform-origin:0 0;top:679.40px;font-size:12.00px;line-height:12.00px;color:#262626;transform:scaleX(0.8833);letter-spacing:0.25px;">Historiales Consumos</div>
<svg class="r" style="left:25px;top:672px" width="24" height="24"><rect x="1" y="1" width="22" height="23" fill="#e8e8e8" stroke="#a0a0a0" stroke-width="1"/><rect x="2" y="2" width="20" height="3" fill="#2a2a2a"/><rect x="3" y="6" width="3" height="16" fill="#fff"/><rect x="7" y="6" width="4" height="16" fill="#fff"/><rect x="11" y="6" width="4.5" height="16" fill="#1a84c4"/><rect x="16" y="6" width="6" height="16" fill="#fff"/><path d="M2 9h20M2 12h20M2 15h20M2 18h20M2 21h20" stroke="#8cb8d8" stroke-width=".8"/></svg>
<div class="r" style="left:174px;top:127px;width:1px;height:714px;background:#a0a0a0;"></div>
<svg class="r" style="left:180px;top:133px" width="7" height="4"><path d="M0 4L3.5 0 7 4z" fill="#888"/></svg>
<div class="r" style="left:179px;top:144px;width:8px;height:670px;background:#b8b8b8;"></div>
<svg class="r" style="left:180px;top:830px" width="7" height="4"><path d="M0 0L3.5 4 7 0z" fill="#888"/></svg>
<div class="r" style="left:192px;top:127px;width:186px;height:28px;background:#fff;border-left:1px solid #c8c8c8;box-sizing:border-box;"></div>
<div class="r" style="left:192px;top:127px;width:186px;height:2px;background:#1aa0ee;"></div>
<div class="t" style="left:222px;transform-origin:0 0;top:135.80px;font-size:12.00px;line-height:12.00px;color:#1a90e0;transform:scaleX(0.8750);">Importar OS desde Factura</div>
<svg class="r" style="left:359px;top:138px" width="9" height="8"><path d="M.5 .5L8.5 7.5M8.5 .5L.5 7.5" stroke="#1aa0ee" stroke-width="1.4"/></svg>
<div class="r" style="left:378px;top:129px;width:128px;height:26px;background:#f0f0f0;border:1px solid #c3c3c3;box-sizing:border-box;"></div>
<div class="t" style="left:407px;transform-origin:0 0;top:136.80px;font-size:12.00px;line-height:12.00px;color:#3a3a3a;transform:scaleX(0.8750);">Actualizar Ordenes</div>
<div class="r" style="left:378px;top:154px;width:762px;height:1px;background:#c3c3c3;"></div>
<svg class="r" style="left:1128px;top:131px" width="10" height="9"><path d="M1 1L9 8M9 1L1 8" stroke="#444" stroke-width="1.4"/></svg>
<svg class="r" style="left:196px;top:163px" width="17" height="16" viewBox="0 0 17 16"><ellipse cx="6" cy="3" rx="5.5" ry="2.5" fill="#fff0d8" stroke="#c89050" stroke-width=".7"/><path d="M.5 3v9c0 1.5 2.5 2.5 5.5 2.5s5.5-1 5.5-2.5V3c0 1.5-2.5 2.5-5.5 2.5S.5 4.5.5 3z" fill="#f4cc90" stroke="#c89050" stroke-width=".7"/><path d="M11 7v8M7 11h8" stroke="#6cae3a" stroke-width="3"/><path d="M11 7.5v7M7.5 11h7" stroke="#b8e090" stroke-width="1.2"/></svg>
<svg class="r" style="left:220px;top:163px" width="16" height="16" viewBox="0 0 16 16"><ellipse cx="6" cy="3" rx="5.5" ry="2.5" fill="#f8f8f8" stroke="#a8a8a8" stroke-width=".7"/><path d="M.5 3v9c0 1.5 2.5 2.5 5.5 2.5s5.5-1 5.5-2.5V3c0 1.5-2.5 2.5-5.5 2.5S.5 4.5.5 3z" fill="#e4e4e4" stroke="#a8a8a8" stroke-width=".7"/><path d="M14.5 6.5L7.5 13.5 6.5 15 8 14.5 15 7.5z" fill="#ddd" stroke="#888" stroke-width=".8"/></svg>
<svg class="r" style="left:244px;top:163px" width="13" height="16" viewBox="0 0 13 16"><ellipse cx="6.5" cy="3" rx="6" ry="2.5" fill="#ffe0a8" stroke="#c88a40" stroke-width=".7"/><path d="M.5 3v10c0 1.5 2.7 2.5 6 2.5s6-1 6-2.5V3c0 1.5-2.7 2.5-6 2.5S.5 4.5.5 3z" fill="#f2b060" stroke="#c88a40" stroke-width=".7"/><path d="M.5 7c0 1.5 2.7 2.5 6 2.5s6-1 6-2.5M.5 10.5c0 1.5 2.7 2.5 6 2.5s6-1 6-2.5" fill="none" stroke="#fff4d8" stroke-width="1"/></svg>
<svg class="r" style="left:265px;top:163px" width="17" height="16" viewBox="0 0 17 16"><ellipse cx="6" cy="3" rx="5.5" ry="2.5" fill="#f8f8f8" stroke="#a8a8a8" stroke-width=".7"/><path d="M.5 3v9c0 1.5 2.5 2.5 5.5 2.5s5.5-1 5.5-2.5V3c0 1.5-2.5 2.5-5.5 2.5S.5 4.5.5 3z" fill="#e4e4e4" stroke="#a8a8a8" stroke-width=".7"/><path d="M9 9l6 6M15 9l-6 6" stroke="#9a9a9a" stroke-width="2.6"/></svg>
<div class="r" style="left:288px;top:161px;width:1px;height:20px;background:#c8c8c8;"></div>
<svg class="r" style="left:294px;top:164px" width="17" height="14" viewBox="0 0 17 14"><path d="M1.5 9V4l2-3h2.5l1 5M15.5 9V4l-2-3H11l-1 5" fill="#c8d4f0" stroke="#5a72b8" stroke-width=".8"/><circle cx="4.5" cy="9.5" r="3.6" fill="#f4f8ff" stroke="#5a72b8" stroke-width="1.2"/><circle cx="12.5" cy="9.5" r="3.6" fill="#f4f8ff" stroke="#5a72b8" stroke-width="1.2"/><circle cx="4.5" cy="9.5" r="1.5" fill="#8aa0d8"/><circle cx="12.5" cy="9.5" r="1.5" fill="#8aa0d8"/><path d="M7 6h3v3H7z" fill="#5a72b8"/></svg>
<svg class="r" style="left:319px;top:163px" width="15" height="16" viewBox="0 0 15 16"><ellipse cx="7.5" cy="3" rx="7" ry="2.5" fill="#f8d080" stroke="#c07820"/><path d="M.5 3.5L6 10v5l3-1V10l5.5-6.5" fill="#f0a030" stroke="#c07820" stroke-width=".8"/></svg>
<div class="r" style="left:341px;top:161px;width:1px;height:20px;background:#c8c8c8;"></div>
<svg class="r" style="left:348px;top:166px" width="15" height="11" viewBox="0 0 15 11"><rect x=".5" y=".5" width="14" height="10" fill="#f8f8f8" stroke="#b0b0b0"/><path d="M.5 .5L7.5 6.5 14.5 .5" fill="none" stroke="#b0b0b0"/></svg>
<svg class="r" style="left:371px;top:165px" width="15" height="13" viewBox="0 0 15 13"><rect x=".5" y=".5" width="14" height="12" fill="#e8e8e8" stroke="#b0b0b0"/><rect x="3" y="3" width="9" height="7" fill="#c8c8c8"/><circle cx="7.5" cy="6" r="2" fill="#a8a8a8"/></svg>
<svg class="r" style="left:395px;top:164px" width="14" height="14" viewBox="0 0 14 14"><rect x=".5" y="1.5" width="12" height="12" fill="#e8e8e8" stroke="#a8a8a8"/><circle cx="8" cy="4" r="2.5" fill="#c8c8c8" stroke="#888" stroke-width=".8"/></svg>
<svg class="r" style="left:418px;top:163px" width="15" height="15" viewBox="0 0 15 15"><rect x=".5" y="2.5" width="12" height="12" fill="#e8e8e8" stroke="#a8a8a8"/><path d="M3 6h8M3 9h8M3 12h8M5 4v10M8 4v10" stroke="#b8b8b8" stroke-width=".8"/><path d="M9 7l5-6" stroke="#999" stroke-width="1.5"/></svg>
<div class="r" style="left:440px;top:161px;width:1px;height:20px;background:#c8c8c8;"></div>
<svg class="r" style="left:448px;top:164px" width="16" height="15" viewBox="0 0 16 15"><rect x=".5" y=".5" width="7" height="2.5" fill="#fff" stroke="#3a88e0"/><path d="M2.5 3v10.5h3M2.5 6.5h3M2.5 10h3" stroke="#3a88e0" fill="none"/><rect x="5.5" y="4.5" width="10" height="3" fill="#fff" stroke="#3a88e0"/><rect x="5.5" y="8.5" width="10" height="3" fill="#fff" stroke="#3a88e0"/><rect x="5.5" y="12" width="10" height="2.5" fill="#fff" stroke="#3a88e0"/></svg>
<svg class="r" style="left:471px;top:164px" width="15" height="15" viewBox="0 0 15 15"><rect x=".5" y="2.5" width="6" height="2.5" fill="#fff" stroke="#3a88e0"/><path d="M2 5v8.5h3M2 8.5h3" stroke="#3a88e0" fill="none"/><rect x="5" y="7" width="7" height="3" fill="#fff" stroke="#3a88e0"/><rect x="5" y="11.5" width="7" height="3" fill="#fff" stroke="#3a88e0"/><path d="M11.5 0v6M8.5 3h6" stroke="#40a040" stroke-width="1.4"/></svg>
<svg class="r" style="left:494px;top:164px" width="15" height="15" viewBox="0 0 15 15"><rect x=".5" y="2.5" width="6" height="2.5" fill="#fff" stroke="#3a88e0"/><path d="M2 5v8.5h3M2 8.5h3" stroke="#3a88e0" fill="none"/><rect x="5" y="7" width="7" height="3" fill="#fff" stroke="#3a88e0"/><rect x="5" y="11.5" width="7" height="3" fill="#fff" stroke="#3a88e0"/><path d="M8.5 2.5h6" stroke="#e03030" stroke-width="1.8"/></svg>
<div class="r" style="left:516px;top:161px;width:1px;height:20px;background:#c8c8c8;"></div>
<svg class="r" style="left:523px;top:163px" width="16" height="16" viewBox="0 0 16 16"><path d="M13.5 8A5.5 5.5 0 1 1 8 2.5" fill="none" stroke="#8cc040" stroke-width="3.2"/><path d="M13.5 8A5.5 5.5 0 1 1 8 2.5" fill="none" stroke="#d8f0a0" stroke-width="1"/><path d="M6 0l5 2.5L6 5.5z" fill="#78b030"/><path d="M11 11l4 4" stroke="#fff" stroke-width="0"/></svg>
<div class="r" style="left:546px;top:161px;width:1px;height:20px;background:#c8c8c8;"></div>
<svg class="r" style="left:553px;top:163px" width="16" height="16" viewBox="0 0 16 16"><rect x=".5" y=".5" width="15" height="15" fill="#f0fff0" stroke="#30a040" stroke-width="1.2"/><rect x="2.5" y="2.5" width="11" height="11" fill="none" stroke="#90d090"/><path d="M4.5 4l7 8M11.5 4l-7 8" stroke="#20902a" stroke-width="2.4"/></svg>
<svg class="r" style="left:576px;top:163px" width="15" height="16" viewBox="0 0 15 16"><path d="M.5 .5h14v9l-5 6h-9z" fill="#fff" stroke="#333" stroke-width="1"/><circle cx="4.5" cy="6" r="2.5" fill="#e05030"/><path d="M4.5 3.5v2.5h2.5" fill="#f0c020"/><path d="M8 3h5M8 5h5M3 10h6M3 12h5" stroke="#ccc" stroke-width=".8"/></svg>
<svg class="r" style="left:599px;top:163px" width="17" height="16" viewBox="0 0 17 16"><rect x=".5" y=".5" width="16" height="15" fill="#fafafa" stroke="#555"/><rect x=".5" y=".5" width="16" height="3" fill="#3a5a90"/><text x="8.5" y="12.5" font-size="7" fill="#555" text-anchor="middle" font-family="Liberation Sans">TxT</text></svg>
<div class="r" style="left:622px;top:161px;width:1px;height:20px;background:#c8c8c8;"></div>
<svg class="r" style="left:630px;top:163px" width="15" height="16" viewBox="0 0 15 16"><rect x=".5" y=".5" width="12" height="15" fill="#f0f6ff" stroke="#7a9ad0"/><circle cx="6" cy="7" r="3.5" fill="#dff0ff" stroke="#3a78c8" stroke-width="1.4"/><path d="M8.5 9.5l5 5" stroke="#e8a030" stroke-width="2.2"/></svg>
<svg class="r" style="left:652px;top:163px" width="16" height="16" viewBox="0 0 16 16"><rect x="3.5" y=".5" width="9" height="5" fill="#fff" stroke="#7a8ab0"/><rect x=".5" y="5.5" width="15" height="7" rx="1" fill="#c8d4e8" stroke="#6a7aa0"/><rect x="3.5" y="10.5" width="9" height="5" fill="#fff" stroke="#7a8ab0"/></svg>
<div class="r" style="left:192px;top:188px;width:125px;height:26px;background:#fff;border-left:1px solid #c8c8c8;box-sizing:border-box;"></div>
<div class="r" style="left:192px;top:188px;width:125px;height:2px;background:#1aa0ee;"></div>
<div class="t" style="left:202.5px;transform-origin:0 0;top:197.30px;font-size:12.00px;line-height:12.00px;color:#1a90e0;transform:scaleX(0.8833);">Primeros 50 vehículos</div>
<div class="r" style="left:317px;top:190px;width:112px;height:24px;background:#f0f0f0;border:1px solid #c3c3c3;box-sizing:border-box;border-bottom:none;"></div>
<div class="t" style="left:326px;transform-origin:0 0;top:197.30px;font-size:12.00px;line-height:12.00px;color:#3a3a3a;transform:scaleX(0.8833);">Todos los vehículos</div>
<div class="r" style="left:192px;top:213px;width:948px;height:187px;background:#fff;border-top:2px solid #b4b4b4;border-left:1px solid #b4b4b4;border-right:1px solid #b4b4b4;box-sizing:border-box;"></div>
<div class="r" style="left:193px;top:215px;width:946px;height:17px;background:#f2f2f2;"></div>
<div class="r" style="left:193px;top:232px;width:946px;height:1px;background:#cfcfcf;"></div>
<div class="r" style="left:203px;top:233px;width:936px;height:17px;background:#00a6f8;"></div>
<div class="t" style="left:-49.5px;width:600px;text-align:center;transform-origin:300px 0;top:217.50px;font-size:12.00px;line-height:12.00px;color:#262626;transform:scaleX(0.8917);">No. Ecónomico</div>
<div class="t" style="left:206px;transform-origin:0 0;top:235.80px;font-size:12.00px;line-height:12.00px;color:#ffffff;transform:scaleX(0.8917);">ATM0123</div>
<div class="t" style="left:130.0px;width:600px;text-align:center;transform-origin:300px 0;top:217.50px;font-size:12.00px;line-height:12.00px;color:#262626;transform:scaleX(0.8917);">Vehículo</div>
<div class="t" style="left:299px;transform-origin:0 0;top:235.80px;font-size:12.00px;line-height:12.00px;color:#ffffff;transform:scaleX(0.8917);">ATM0123 Automovil&nbsp; Nissan&nbsp; Tsuru&nbsp; 864PLK8</div>
<div class="t" style="left:565px;transform-origin:0 0;top:217.50px;font-size:12.00px;line-height:12.00px;color:#262626;transform:scaleX(0.8917);">Serie de M...</div>
<div class="t" style="left:565px;transform-origin:0 0;top:235.80px;font-size:12.00px;line-height:12.00px;color:#ffffff;transform:scaleX(0.8917);">HECHO E...</div>
<div class="t" style="left:632px;transform-origin:0 0;top:217.50px;font-size:12.00px;line-height:12.00px;color:#262626;transform:scaleX(0.8917);">Serie de Ch...</div>
<div class="t" style="left:632px;transform-origin:0 0;top:235.80px;font-size:12.00px;line-height:12.00px;color:#ffffff;transform:scaleX(0.8917);">1GCFG15X...</div>
<div class="t" style="left:702px;transform-origin:0 0;top:217.50px;font-size:12.00px;line-height:12.00px;color:#262626;transform:scaleX(0.8917);">Marca</div>
<div class="t" style="left:702px;transform-origin:0 0;top:235.80px;font-size:12.00px;line-height:12.00px;color:#ffffff;transform:scaleX(0.8917);">Niss...</div>
<div class="t" style="left:738px;transform-origin:0 0;top:217.50px;font-size:12.00px;line-height:12.00px;color:#262626;transform:scaleX(0.8917);">Clasificac...</div>
<div class="t" style="left:738px;transform-origin:0 0;top:235.80px;font-size:12.00px;line-height:12.00px;color:#ffffff;transform:scaleX(0.8917);">Propios</div>
<div class="t" style="left:515.5px;width:600px;text-align:center;transform-origin:300px 0;top:217.50px;font-size:12.00px;line-height:12.00px;color:#262626;transform:scaleX(0.8917);">Placa</div>
<div class="t" style="left:798px;transform-origin:0 0;top:235.80px;font-size:12.00px;line-height:12.00px;color:#ffffff;transform:scaleX(0.8917);">864P...</div>
<div class="t" style="left:550.5px;width:600px;text-align:center;transform-origin:300px 0;top:217.50px;font-size:12.00px;line-height:12.00px;color:#262626;transform:scaleX(0.8917);">Tipo</div>
<div class="t" style="left:837px;transform-origin:0 0;top:235.80px;font-size:12.00px;line-height:12.00px;color:#ffffff;transform:scaleX(0.8917);">Aut...</div>
<div class="t" style="left:868px;transform-origin:0 0;top:217.50px;font-size:12.00px;line-height:12.00px;color:#262626;transform:scaleX(0.8917);">SubMar...</div>
<div class="t" style="left:868px;transform-origin:0 0;top:235.80px;font-size:12.00px;line-height:12.00px;color:#ffffff;transform:scaleX(0.8917);">Tsuru</div>
<div class="t" style="left:642.0px;width:600px;text-align:center;transform-origin:300px 0;top:217.50px;font-size:12.00px;line-height:12.00px;color:#262626;transform:scaleX(0.8917);">Cliente</div>
<div class="t" style="left:921px;transform-origin:0 0;top:235.80px;font-size:12.00px;line-height:12.00px;color:#ffffff;transform:scaleX(0.8917);">Almac...</div>
<div class="t" style="left:699.5px;width:600px;text-align:center;transform-origin:300px 0;top:217.50px;font-size:12.00px;line-height:12.00px;color:#262626;transform:scaleX(0.8917);">Combustible</div>
<div class="t" style="left:967px;transform-origin:0 0;top:235.80px;font-size:12.00px;line-height:12.00px;color:#ffffff;transform:scaleX(0.8917);">Gasolina</div>
<div class="t" style="left:1036px;transform-origin:0 0;top:217.50px;font-size:12.00px;line-height:12.00px;color:#262626;transform:scaleX(0.8917);">A...</div>
<div class="t" style="left:1036px;transform-origin:0 0;top:235.80px;font-size:12.00px;line-height:12.00px;color:#ffffff;transform:scaleX(0.8917);">2...</div>
<div class="t" style="left:1059px;transform-origin:0 0;top:217.50px;font-size:12.00px;line-height:12.00px;color:#262626;transform:scaleX(0.8917);">Codigo de Bar...</div>
<div class="t" style="left:1059px;transform-origin:0 0;top:235.80px;font-size:12.00px;line-height:12.00px;color:#ffffff;transform:scaleX(0.8917);">1091</div>
<div class="r" style="left:203px;top:215px;width:1px;height:17px;background:#d4d4d4;"></div>
<div class="r" style="left:203px;top:233px;width:1px;height:17px;background:#bcbcbc;"></div>
<div class="r" style="left:296px;top:215px;width:1px;height:17px;background:#d4d4d4;"></div>
<div class="r" style="left:296px;top:233px;width:1px;height:17px;background:#bcbcbc;"></div>
<div class="r" style="left:562px;top:215px;width:1px;height:17px;background:#d4d4d4;"></div>
<div class="r" style="left:562px;top:233px;width:1px;height:17px;background:#bcbcbc;"></div>
<div class="r" style="left:629px;top:215px;width:1px;height:17px;background:#d4d4d4;"></div>
<div class="r" style="left:629px;top:233px;width:1px;height:17px;background:#bcbcbc;"></div>
<div class="r" style="left:699px;top:215px;width:1px;height:17px;background:#d4d4d4;"></div>
<div class="r" style="left:699px;top:233px;width:1px;height:17px;background:#bcbcbc;"></div>
<div class="r" style="left:735px;top:215px;width:1px;height:17px;background:#d4d4d4;"></div>
<div class="r" style="left:735px;top:233px;width:1px;height:17px;background:#bcbcbc;"></div>
<div class="r" style="left:795px;top:215px;width:1px;height:17px;background:#d4d4d4;"></div>
<div class="r" style="left:795px;top:233px;width:1px;height:17px;background:#bcbcbc;"></div>
<div class="r" style="left:834px;top:215px;width:1px;height:17px;background:#d4d4d4;"></div>
<div class="r" style="left:834px;top:233px;width:1px;height:17px;background:#bcbcbc;"></div>
<div class="r" style="left:865px;top:215px;width:1px;height:17px;background:#d4d4d4;"></div>
<div class="r" style="left:865px;top:233px;width:1px;height:17px;background:#bcbcbc;"></div>
<div class="r" style="left:918px;top:215px;width:1px;height:17px;background:#d4d4d4;"></div>
<div class="r" style="left:918px;top:233px;width:1px;height:17px;background:#bcbcbc;"></div>
<div class="r" style="left:964px;top:215px;width:1px;height:17px;background:#d4d4d4;"></div>
<div class="r" style="left:964px;top:233px;width:1px;height:17px;background:#bcbcbc;"></div>
<div class="r" style="left:1033px;top:215px;width:1px;height:17px;background:#d4d4d4;"></div>
<div class="r" style="left:1033px;top:233px;width:1px;height:17px;background:#bcbcbc;"></div>
<div class="r" style="left:1056px;top:215px;width:1px;height:17px;background:#d4d4d4;"></div>
<div class="r" style="left:1056px;top:233px;width:1px;height:17px;background:#bcbcbc;"></div>
<div class="r" style="left:203px;top:233px;width:936px;height:17px;outline:1px dotted #f08030;outline-offset:-1px;"></div>
<div class="r" style="left:193px;top:233px;width:10px;height:17px;background:#f2f2f2;"></div>
<div class="r" style="left:193px;top:250px;width:10px;height:1px;background:#d4d4d4;"></div>
<svg class="r" style="left:194px;top:220px" width="8" height="8"><path d="M4 .5v7M.5 4h7M1.5 1.5l5 5M6.5 1.5l-5 5" stroke="#6a6a6a" stroke-width="1"/></svg>
<svg class="r" style="left:196px;top:238px" width="5" height="8"><path d="M0 .5L4.5 4 0 7.5z" fill="#505050"/></svg>
<div class="r" style="left:192px;top:399px;width:948px;height:30px;background:#fff;border:1px solid #c3c3c3;box-sizing:border-box;"></div>
<svg class="r" style="left:198px;top:410px" width="9" height="8"><path d="M.5 .5L8.5 7.5M8.5 .5L.5 7.5" stroke="#555" stroke-width="1.4"/></svg>
<svg class="r" style="left:214px;top:407px" width="13" height="13"><rect x=".5" y=".5" width="12" height="12" fill="#f0f0f0" stroke="#7a7a7a"/><path d="M2.8 6.3l2.6 2.7 4.8-5.6" fill="none" stroke="#505050" stroke-width="2"/></svg>
<div class="t" style="left:236.5px;transform-origin:0 0;top:407.80px;font-size:12.00px;line-height:12.00px;color:#262626;transform:scaleX(0.8833);">(Vehículo = ATM0123 Automovil&nbsp; Nissan&nbsp; Tsuru&nbsp; 864PLK8 )</div>
<div class="r" style="left:1044px;top:403px;width:91px;height:21px;background:#efefef;border:1px solid #c4c4c4;box-sizing:border-box;border-radius:3px;background:linear-gradient(#fbfbfb,#e6e6e6);"></div>
<div class="t" style="left:1047px;transform-origin:0 0;top:407.60px;font-size:12.00px;line-height:12.00px;color:#2a2a2a;transform:scaleX(0.8833);">Personalización...</div>
<div class="r" style="left:192px;top:429px;width:58px;height:27px;background:#fff;border-left:1px solid #c8c8c8;box-sizing:border-box;"></div>
<div class="r" style="left:192px;top:429px;width:58px;height:2px;background:#1aa0ee;"></div>
<div class="t" style="left:202px;transform-origin:0 0;top:437.80px;font-size:12.00px;line-height:12.00px;color:#1a90e0;transform:scaleX(0.8750);">Abiertas</div>
<div class="r" style="left:250px;top:431px;width:63px;height:25px;background:#f0f0f0;border:1px solid #c3c3c3;box-sizing:border-box;border-bottom:none;"></div>
<div class="t" style="left:258px;transform-origin:0 0;top:437.80px;font-size:12.00px;line-height:12.00px;color:#3a3a3a;transform:scaleX(0.8750);">Historicas</div>
<div class="r" style="left:192px;top:456px;width:948px;height:327px;background:#fff;border-top:2px solid #b4b4b4;border-left:1px solid #b4b4b4;border-right:1px solid #b4b4b4;box-sizing:border-box;"></div>
<div class="r" style="left:193px;top:458px;width:946px;height:35px;background:#f2f2f2;"></div>
<div class="r" style="left:193px;top:475px;width:946px;height:1px;background:#d4d4d4;"></div>
<div class="r" style="left:203px;top:493px;width:936px;height:1px;background:#d4d4d4;"></div>
<div class="t" style="left:128.5px;width:600px;text-align:center;transform-origin:300px 0;top:460.80px;font-size:12.00px;line-height:12.00px;color:#262626;transform:scaleX(0.8917);">Factura</div>
<div class="r" style="left:203px;top:458px;width:1px;height:17px;background:#d4d4d4;"></div>
<div class="t" style="left:483.5px;width:600px;text-align:center;transform-origin:300px 0;top:460.80px;font-size:12.00px;line-height:12.00px;color:#262626;transform:scaleX(0.8917);">Empresa</div>
<div class="r" style="left:652px;top:458px;width:1px;height:17px;background:#d4d4d4;"></div>
<div class="t" style="left:727.0px;width:600px;text-align:center;transform-origin:300px 0;top:460.80px;font-size:12.00px;line-height:12.00px;color:#262626;transform:scaleX(0.8917);">Orden de Servicio</div>
<div class="r" style="left:913px;top:458px;width:1px;height:17px;background:#d4d4d4;"></div>
<div class="t" style="left:-49.0px;width:600px;text-align:center;transform-origin:300px 0;top:478.80px;font-size:12.00px;line-height:12.00px;color:#262626;transform:scaleX(0.8917);">Folio</div>
<div class="r" style="left:203px;top:476px;width:1px;height:17px;background:#d4d4d4;"></div>
<div class="t" style="left:42.5px;width:600px;text-align:center;transform-origin:300px 0;top:478.80px;font-size:12.00px;line-height:12.00px;color:#262626;transform:scaleX(0.8917);">Fecha</div>
<div class="r" style="left:297px;top:476px;width:1px;height:17px;background:#d4d4d4;"></div>
<div class="t" style="left:131.5px;width:600px;text-align:center;transform-origin:300px 0;top:478.80px;font-size:12.00px;line-height:12.00px;color:#262626;transform:scaleX(0.8917);">Mano de Obra</div>
<div class="r" style="left:386px;top:476px;width:1px;height:17px;background:#d4d4d4;"></div>
<div class="t" style="left:211.5px;width:600px;text-align:center;transform-origin:300px 0;top:478.80px;font-size:12.00px;line-height:12.00px;color:#262626;transform:scaleX(0.8917);">Materiales</div>
<div class="r" style="left:475px;top:476px;width:1px;height:17px;background:#d4d4d4;"></div>
<div class="t" style="left:275.0px;width:600px;text-align:center;transform-origin:300px 0;top:478.80px;font-size:12.00px;line-height:12.00px;color:#262626;transform:scaleX(0.8917);">Impuestos</div>
<div class="r" style="left:546px;top:476px;width:1px;height:17px;background:#d4d4d4;"></div>
<div class="t" style="left:610.5px;transform-origin:0 0;top:478.80px;font-size:12.00px;line-height:12.00px;color:#262626;transform:scaleX(0.8917);">Total</div>
<div class="r" style="left:602px;top:476px;width:1px;height:17px;background:#d4d4d4;"></div>
<div class="t" style="left:425.0px;width:600px;text-align:center;transform-origin:300px 0;top:478.80px;font-size:12.00px;line-height:12.00px;color:#262626;transform:scaleX(0.8917);">Nombre</div>
<div class="r" style="left:652px;top:476px;width:1px;height:17px;background:#d4d4d4;"></div>
<div class="t" style="left:524.5px;width:600px;text-align:center;transform-origin:300px 0;top:478.80px;font-size:12.00px;line-height:12.00px;color:#262626;transform:scaleX(0.8917);">Rfc</div>
<div class="r" style="left:796px;top:476px;width:1px;height:17px;background:#d4d4d4;"></div>
<div class="t" style="left:583.0px;width:600px;text-align:center;transform-origin:300px 0;top:478.80px;font-size:12.00px;line-height:12.00px;color:#262626;transform:scaleX(0.8917);">Clave</div>
<div class="r" style="left:851px;top:476px;width:1px;height:17px;background:#d4d4d4;"></div>
<div class="t" style="left:641.5px;width:600px;text-align:center;transform-origin:300px 0;top:478.80px;font-size:12.00px;line-height:12.00px;color:#262626;transform:scaleX(0.8917);">Inicio</div>
<div class="r" style="left:913px;top:476px;width:1px;height:17px;background:#d4d4d4;"></div>
<div class="t" style="left:695.0px;width:600px;text-align:center;transform-origin:300px 0;top:478.80px;font-size:12.00px;line-height:12.00px;color:#262626;transform:scaleX(0.8917);">Fin</div>
<div class="r" style="left:968px;top:476px;width:1px;height:17px;background:#d4d4d4;"></div>
<div class="t" style="left:745.5px;width:600px;text-align:center;transform-origin:300px 0;top:478.80px;font-size:12.00px;line-height:12.00px;color:#262626;transform:scaleX(0.8917);">Duración</div>
<div class="r" style="left:1020px;top:476px;width:1px;height:17px;background:#d4d4d4;"></div>
<div class="t" style="left:805.0px;width:600px;text-align:center;transform-origin:300px 0;top:478.80px;font-size:12.00px;line-height:12.00px;color:#262626;transform:scaleX(0.8917);">Estatus</div>
<div class="r" style="left:1069px;top:476px;width:1px;height:17px;background:#d4d4d4;"></div>
<div class="r" style="left:203px;top:494px;width:936px;height:35px;background:#dcf1fd;"></div>
<div class="r" style="left:386px;top:512px;width:266px;height:17px;background:#fff;"></div>
<div class="r" style="left:913px;top:512px;width:226px;height:17px;background:#fff;"></div>
<div class="r" style="left:193px;top:511px;width:10px;height:1px;background:#d4d4d4;"></div>
<div class="r" style="left:386px;top:511px;width:266px;height:1px;background:#d4d4d4;"></div>
<div class="r" style="left:913px;top:511px;width:226px;height:1px;background:#d4d4d4;"></div>
<div class="r" style="left:193px;top:529px;width:946px;height:1px;background:#d4d4d4;"></div>
<div class="r" style="left:203px;top:494px;width:1px;height:35px;background:#c8c8c8;"></div>
<div class="r" style="left:297px;top:494px;width:1px;height:35px;background:#c8c8c8;"></div>
<div class="r" style="left:386px;top:494px;width:1px;height:35px;background:#c8c8c8;"></div>
<div class="r" style="left:475px;top:494px;width:1px;height:35px;background:#c8c8c8;"></div>
<div class="r" style="left:546px;top:494px;width:1px;height:35px;background:#c8c8c8;"></div>
<div class="r" style="left:602px;top:494px;width:1px;height:35px;background:#c8c8c8;"></div>
<div class="r" style="left:652px;top:494px;width:1px;height:35px;background:#c8c8c8;"></div>
<div class="r" style="left:796px;top:494px;width:1px;height:35px;background:#c8c8c8;"></div>
<div class="r" style="left:851px;top:494px;width:1px;height:35px;background:#c8c8c8;"></div>
<div class="r" style="left:913px;top:494px;width:1px;height:35px;background:#c8c8c8;"></div>
<div class="r" style="left:968px;top:494px;width:1px;height:35px;background:#c8c8c8;"></div>
<div class="r" style="left:1020px;top:494px;width:1px;height:35px;background:#c8c8c8;"></div>
<div class="r" style="left:1069px;top:494px;width:1px;height:35px;background:#c8c8c8;"></div>
<div class="r" style="left:1139px;top:494px;width:1px;height:35px;background:#c8c8c8;"></div>
<div class="r" style="left:193px;top:494px;width:10px;height:35px;background:#f2f2f2;"></div>
<div class="r" style="left:193px;top:511px;width:10px;height:1px;background:#d4d4d4;"></div>
<div class="r" style="left:203px;top:458px;width:1px;height:71px;background:#d4d4d4;"></div>
<svg class="r" style="left:194px;top:481px" width="8" height="8"><path d="M4 .5v7M.5 4h7M1.5 1.5l5 5M6.5 1.5l-5 5" stroke="#6a6a6a" stroke-width="1"/></svg>
<svg class="r" style="left:196px;top:498px" width="5" height="8"><path d="M0 .5L4.5 4 0 7.5z" fill="#505050"/></svg>
<div class="r" style="left:193px;top:529px;width:10px;height:1px;background:#d4d4d4;"></div>
<div class="t" style="left:206px;transform-origin:0 0;top:505.80px;font-size:12.00px;line-height:12.00px;color:#262626;transform:scaleX(0.8917);">1885</div>
<div class="t" style="left:41.5px;width:600px;text-align:center;transform-origin:300px 0;top:505.80px;font-size:12.00px;line-height:12.00px;color:#262626;transform:scaleX(0.8917);">14/04/2016</div>
<div class="t" style="left:-127px;width:600px;text-align:right;transform-origin:600px 0;top:497.10px;font-size:12.00px;line-height:12.00px;color:#262626;transform:scaleX(0.8917);">$120.00</div>
<div class="t" style="left:-127px;width:600px;text-align:right;transform-origin:600px 0;top:515.10px;font-size:12.00px;line-height:12.00px;color:#262626;transform:scaleX(0.8917);">$80.00</div>
<div class="t" style="left:-56px;width:600px;text-align:right;transform-origin:600px 0;top:497.10px;font-size:12.00px;line-height:12.00px;color:#262626;transform:scaleX(0.8917);">$200.00</div>
<div class="t" style="left:-56px;width:600px;text-align:right;transform-origin:600px 0;top:515.10px;font-size:12.00px;line-height:12.00px;color:#262626;transform:scaleX(0.8917);">$160.00</div>
<div class="t" style="left:0px;width:600px;text-align:right;transform-origin:600px 0;top:497.10px;font-size:12.00px;line-height:12.00px;color:#262626;transform:scaleX(0.8917);">51.2</div>
<div class="t" style="left:0px;width:600px;text-align:right;transform-origin:600px 0;top:515.10px;font-size:12.00px;line-height:12.00px;color:#262626;transform:scaleX(0.8917);">38.4</div>
<div class="t" style="left:50px;width:600px;text-align:right;transform-origin:600px 0;top:497.10px;font-size:12.00px;line-height:12.00px;color:#262626;transform:scaleX(0.8917);">$320.00</div>
<div class="t" style="left:50px;width:600px;text-align:right;transform-origin:600px 0;top:515.10px;font-size:12.00px;line-height:12.00px;color:#262626;transform:scaleX(0.8917);">$240.00</div>
<div class="t" style="left:655px;transform-origin:0 0;top:505.80px;font-size:12.00px;line-height:12.00px;color:#262626;transform:scaleX(0.8917);">Desarrollo de Software Inte...</div>
<div class="t" style="left:799px;transform-origin:0 0;top:505.80px;font-size:12.00px;line-height:12.00px;color:#262626;transform:scaleX(0.8917);">DSI030...</div>
<div class="t" style="left:854px;transform-origin:0 0;top:505.80px;font-size:12.00px;line-height:12.00px;color:#262626;transform:scaleX(0.8917);">EMP025</div>
<div class="t" style="left:916px;transform-origin:0 0;top:497.10px;font-size:12.00px;line-height:12.00px;color:#262626;transform:scaleX(0.8917);">13/04/2...</div>
<div class="t" style="left:971px;transform-origin:0 0;top:497.10px;font-size:12.00px;line-height:12.00px;color:#262626;transform:scaleX(0.8917);">13/04/...</div>
<div class="t" style="left:466px;width:600px;text-align:right;transform-origin:600px 0;top:497.10px;font-size:12.00px;line-height:12.00px;color:#262626;transform:scaleX(0.8917);">1.00 Hrs</div>
<div class="t" style="left:1072px;transform-origin:0 0;top:497.10px;font-size:12.00px;line-height:12.00px;color:#262626;transform:scaleX(0.8917);">OS Finaliza...</div>
<div class="t" style="left:916px;transform-origin:0 0;top:515.10px;font-size:12.00px;line-height:12.00px;color:#262626;transform:scaleX(0.8917);">13/04/2...</div>
<div class="t" style="left:971px;transform-origin:0 0;top:515.10px;font-size:12.00px;line-height:12.00px;color:#262626;transform:scaleX(0.8917);">13/04/...</div>
<div class="t" style="left:466px;width:600px;text-align:right;transform-origin:600px 0;top:515.10px;font-size:12.00px;line-height:12.00px;color:#262626;transform:scaleX(0.8917);">1.50 Hrs</div>
<div class="t" style="left:1072px;transform-origin:0 0;top:515.10px;font-size:12.00px;line-height:12.00px;color:#262626;transform:scaleX(0.8917);">OS Finaliza...</div>
<div class="r" style="left:192px;top:782px;width:948px;height:30px;background:#fff;border:1px solid #c3c3c3;box-sizing:border-box;"></div>
<svg class="r" style="left:198px;top:793px" width="9" height="8"><path d="M.5 .5L8.5 7.5M8.5 .5L.5 7.5" stroke="#555" stroke-width="1.4"/></svg>
<svg class="r" style="left:214px;top:790px" width="13" height="13"><rect x=".5" y=".5" width="12" height="12" fill="#f0f0f0" stroke="#7a7a7a"/><path d="M2.8 6.3l2.6 2.7 4.8-5.6" fill="none" stroke="#505050" stroke-width="2"/></svg>
<div class="t" style="left:236.5px;transform-origin:0 0;top:790.80px;font-size:12.00px;line-height:12.00px;color:#262626;transform:scaleX(0.8833);">(Total = $320.00)</div>
<svg class="r" style="left:325px;top:789px" width="15" height="15"><circle cx="7.5" cy="7.5" r="6.8" fill="#fafafa" stroke="#c8c8c8" stroke-width="1.2"/><path d="M3.5 4.5h8L8.5 8v3.5l-2-1V8z" fill="#d0d0d0"/></svg>
<div class="r" style="left:1044px;top:786px;width:91px;height:21px;background:#efefef;border:1px solid #c4c4c4;box-sizing:border-box;border-radius:3px;background:linear-gradient(#fbfbfb,#e6e6e6);"></div>
<div class="t" style="left:1047px;transform-origin:0 0;top:790.60px;font-size:12.00px;line-height:12.00px;color:#2a2a2a;transform:scaleX(0.8833);">Personalización...</div>
<div class="t" style="left:203.5px;transform-origin:0 0;top:819.80px;font-size:12.00px;line-height:12.00px;color:#343c58;transform:scaleX(0.9083);">Master Total 2 Registros</div>
<div class="r" style="left:100px;top:843px;width:1px;height:19px;background:#c3c3c3;"></div>
<div class="r" style="left:455px;top:843px;width:1px;height:19px;background:#c3c3c3;"></div>
<div class="r" style="left:740px;top:843px;width:1px;height:19px;background:#c3c3c3;"></div>
<div class="r" style="left:826px;top:843px;width:1px;height:19px;background:#c3c3c3;"></div>
<div class="r" style="left:880px;top:843px;width:1px;height:19px;background:#c3c3c3;"></div>
<div class="r" style="left:935px;top:843px;width:1px;height:19px;background:#c3c3c3;"></div>
<div class="r" style="left:1065px;top:843px;width:1px;height:19px;background:#c3c3c3;"></div>
<div class="t" style="left:106px;transform-origin:0 0;top:847.50px;font-size:12.00px;line-height:12.00px;color:#262626;transform:scaleX(0.8750);">Empresa: Empresa ACME, S.A. de C.V.</div>
<div class="t" style="left:458.5px;transform-origin:0 0;top:847.50px;font-size:12.00px;line-height:12.00px;color:#262626;transform:scaleX(0.8917);">Administrador: Admin()</div>
<div class="t" style="left:743.5px;transform-origin:0 0;top:847.50px;font-size:12.00px;line-height:12.00px;color:#262626;transform:scaleX(0.8667);">Access 2000</div>
<div class="t" style="left:939.5px;transform-origin:0 0;top:847.50px;font-size:12.00px;line-height:12.00px;color:#a8a8a8;transform:scaleX(0.8667);">CAPS</div>
<div class="t" style="left:974px;transform-origin:0 0;top:847.50px;font-size:12.00px;line-height:12.00px;color:#262626;transform:scaleX(0.8667);">NUM</div>
<div class="t" style="left:1005.5px;transform-origin:0 0;top:847.50px;font-size:12.00px;line-height:12.00px;color:#a8a8a8;transform:scaleX(0.8667);">SCRL</div>
<div class="t" style="left:1041px;transform-origin:0 0;top:847.50px;font-size:12.00px;line-height:12.00px;color:#a8a8a8;transform:scaleX(0.8667);">INS</div>
<div class="r" style="left:0px;top:862px;width:1152px;height:2px;background:#1e1e1e;"></div>
<div class="r" style="left:801px;top:862px;width:46px;height:2px;background:#4e4e4e;"></div>
</body></html>
